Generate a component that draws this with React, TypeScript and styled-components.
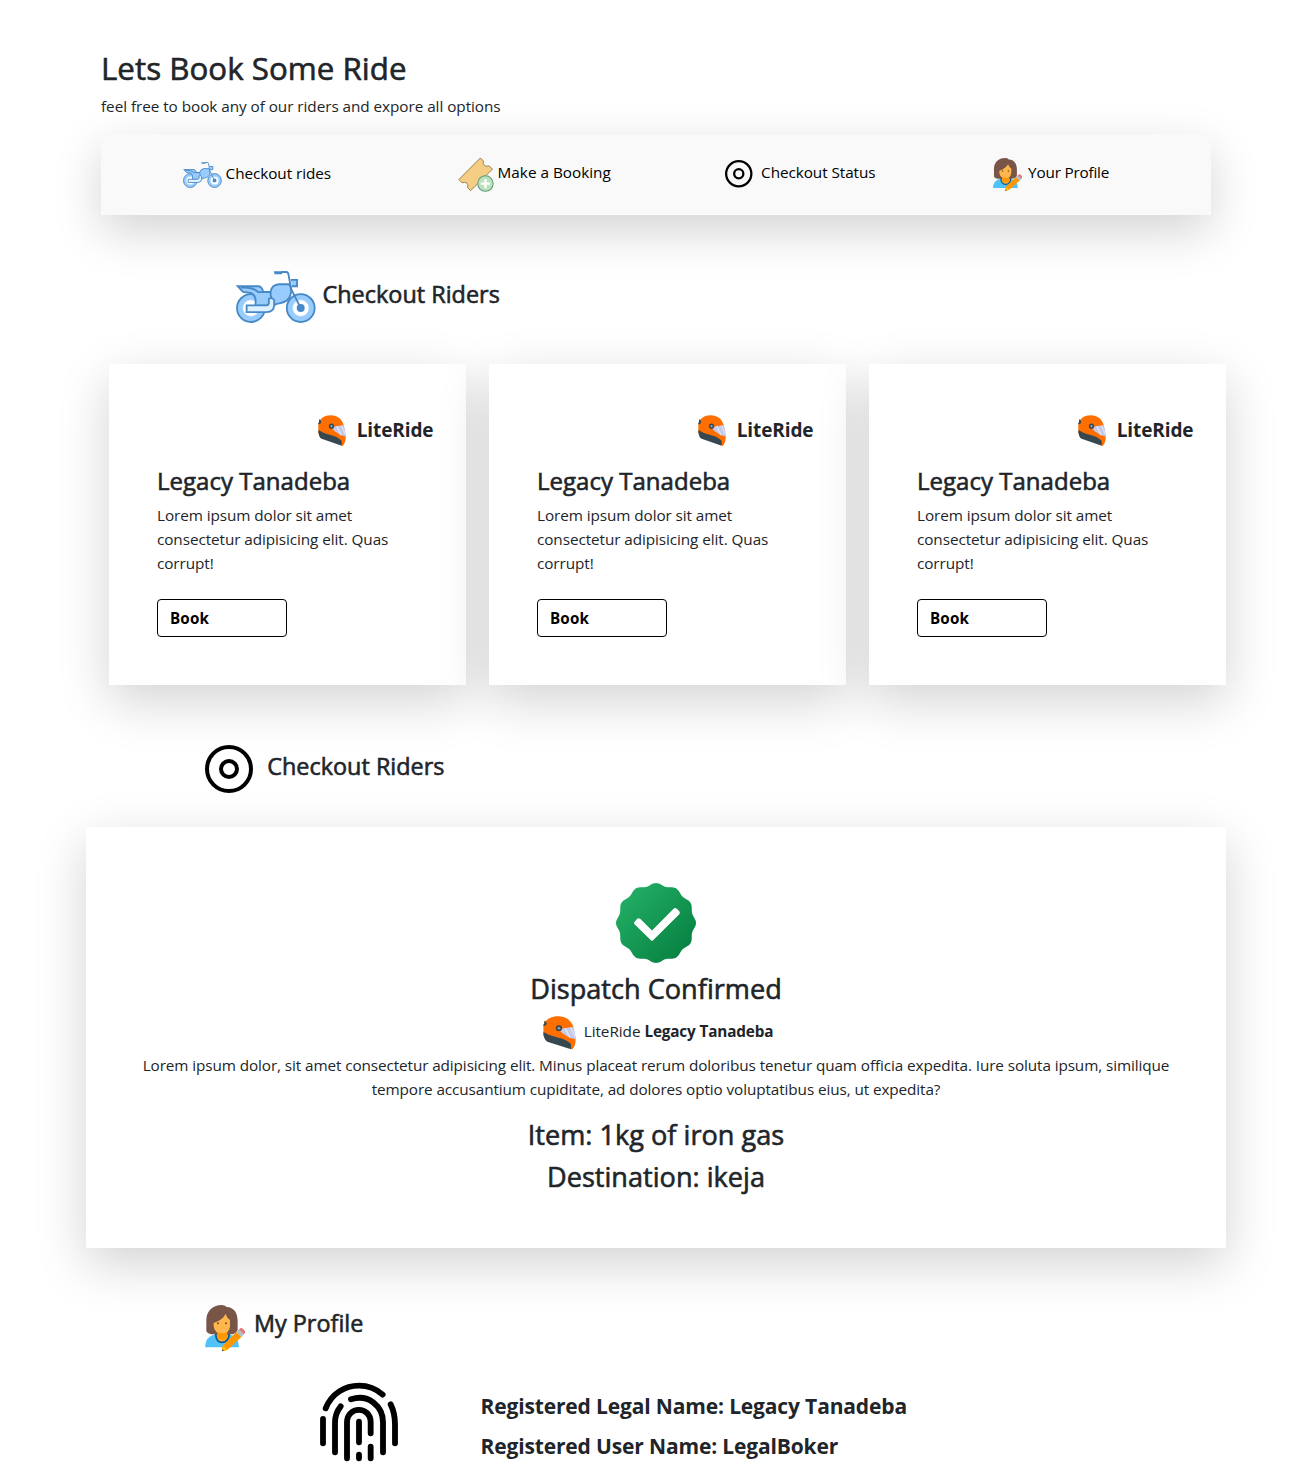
import React from 'react';
import styled, { createGlobalStyle, css } from 'styled-components';

const GlobalStyle = createGlobalStyle`
  *, *::before, *::after { box-sizing: border-box; }
  html, body { margin: 0; padding: 0; background: #fff; }
  body {
    font-family: 'Open Sans', 'Noto Sans', sans-serif;
    font-size: 15.3px;
    line-height: 24px;
    letter-spacing: -0.05px;
    color: #212529;
    overflow: hidden;
  }
  h1, h2, h3, p { margin: 0; font-weight: 400; }
  svg { display: block; flex: none; }
`;

const medium = css`
  font-weight: 400;
  letter-spacing: 0.02px;
  -webkit-text-stroke: 0.6px currentColor;
`;

const shadow = '0 16px 48px rgba(0, 0, 0, 0.175)';

const Page = styled.main`
  width: 1140px;
  height: 1465px;
  margin-left: 86px;
  padding-top: 48px;
`;

const Intro = styled.header`
  padding: 0 15px;
`;

const PageTitle = styled.h1`
  ${medium}
  padding-top: 1px;
  font-size: 31.3px;
  line-height: 38.4px;
  margin-bottom: 7px;
`;

const Nav = styled.nav`
  display: grid;
  grid-template-columns: 275px 267.5px 267.5px auto;
  align-items: center;
  height: 80.6px;
  margin: 16px 15px 0;
  padding: 0 0 1px 81.6px;
  background: #f9f9f9;
  box-shadow: ${shadow};
`;

const NavItem = styled.a<{ $gap: number; $drop?: number; $spacing?: number }>`
  display: flex;
  align-items: center;
  gap: ${p => p.$gap}px;
  padding-top: ${p => p.$drop ?? 0}px;
  color: #000;
  letter-spacing: ${p => p.$spacing ?? -0.07}px;
  white-space: nowrap;
`;

const NavLabel = styled.span`
  padding-bottom: 4px;
`;

const SectionTitle = styled.div<{ $top: number; $left: number; $gap: number; $drop: number }>`
  display: flex;
  align-items: flex-start;
  gap: ${p => p.$gap}px;
  margin-top: ${p => p.$top}px;
  margin-left: ${p => p.$left}px;
  h3 {
    ${medium}
    padding-top: ${p => p.$drop}px;
    font-size: 23.4px;
    line-height: 28.8px;
  }
`;

const Cards = styled.section`
  display: grid;
  grid-template-columns: repeat(3, 357px);
  gap: 23px;
  margin: 41px 0 0 23px;
`;

const Card = styled.article`
  height: 321px;
  padding: 50.5px 48px 48px;
  background: #fff;
  box-shadow: ${shadow};
`;

const Brand = styled.div`
  display: flex;
  align-items: center;
  justify-content: flex-end;
  gap: 11px;
  height: 31px;
  margin: 0 -15.5px 20.5px 0;
  font-size: 19px;
  font-weight: 700;
  svg { margin-top: 1px; }
  span { letter-spacing: -0.1px; }
`;

const RiderName = styled.h3`
  ${medium}
  padding-top: 1px;
  font-size: 24px;
  line-height: 28.8px;
  margin-bottom: 7px;
`;

const RiderText = styled.p`
  letter-spacing: -0.08px;
`;

const BookButton = styled.button`
  display: block;
  width: 130px;
  height: 38px;
  margin-top: 24px;
  padding: 0 12px;
  border: 1px solid #000;
  border-radius: 4px;
  background: transparent;
  color: #000;
  font: 700 15.2px/24px 'Open Sans', 'Noto Sans', sans-serif;
  letter-spacing: 0.15px;
  text-align: left;
`;

const Status = styled.section`
  display: flex;
  flex-direction: column;
  align-items: center;
  height: 421px;
  margin-top: 34px;
  padding: 56px 48px 48px;
  background: #fff;
  box-shadow: ${shadow};
  text-align: center;
`;

const StatusHeading = styled.h2<{ $top: number }>`
  ${medium}
  margin-top: ${p => p.$top}px;
  font-size: 27.1px;
  line-height: 33.6px;
`;

const Dispatcher = styled.div`
  display: flex;
  align-items: center;
  gap: 8px;
  height: 40px;
  margin: 7px 0 0 4px;
  p { padding-bottom: 4px; }
  b { letter-spacing: -0.15px; }
`;

const StatusText = styled.p`
  letter-spacing: -0.1px;
`;

const Profile = styled.section`
  display: flex;
  gap: 81.5px;
  margin: 31px 0 0 233px;
`;

const ProfileLines = styled.div`
  padding-top: 8px;
`;

const ProfileLine = styled.p`
  margin-bottom: 8px;
  font-size: 21px;
  font-weight: 700;
  line-height: 32px;
  letter-spacing: -0.15px;
`;

const Motorcycle = ({ width, height }: { width: number; height: number }) => (
  <svg width={width} height={height} viewBox="48 47 241 157" preserveAspectRatio="none" fill="#98ccfd" stroke="#4788c7" strokeWidth="5.5">
    <circle cx="93" cy="159" r="42" />
    <circle cx="93" cy="159" r="25" fill="#fff" stroke="#a9d2fb" strokeWidth="2" />
    <circle cx="243" cy="159" r="42" />
    <circle cx="243" cy="159" r="25" fill="#fff" stroke="#a9d2fb" strokeWidth="2" />
    <path d="M53 93H116Q126 94 130 110H152Q156 88 178 87H207Q213 91 214 103C214 132 200 142 171 146L160 152H107V132Q105 120 95 114L69 110Z" />
    <path d="M63 97Q101 95 115 111H150" fill="none" />
    <path d="M152 110Q151 121 156 131" fill="none" />
    <path d="M80 151H138Q145 151 147 144V131Q154 126 163 134V151Q162 170 140 171H80Z" fill="#dff0fe" />
    <path d="M162 48H187V57H164Z" fill="#4788c7" stroke="none" />
    <path d="M184 50H199Q205 50 206 57L214 101L243 159" fill="none" />
    <path d="M213 74H232V93H216" />
    <circle cx="243" cy="159" r="12" fill="#4788c7" stroke="none" />
  </svg>
);

const Ticket = () => (
  <svg width="36" height="35" viewBox="38 34 106 104">
    <path
      d="M104 37 113 46Q110 55 117 60Q123 63 129 60L140 70L75 134L66 125Q69 115 63 111Q58 107 50 111L40 101Z"
      fill="#f5ce85" stroke="#967a44" strokeWidth="2.8" strokeLinejoin="round"
    />
    <circle cx="119" cy="113" r="23" fill="#bae0bd" stroke="#5e9c76" strokeWidth="3" />
    <path d="M119 99V127M105 113H133" stroke="#fff" strokeWidth="7" />
  </svg>
);

const Target = ({ size }: { size: number }) => (
  <svg width={size} height={size} viewBox="0 0 48 48" fill="none" stroke="#000" strokeWidth="4">
    <circle cx="24" cy="24" r="22" />
    <circle cx="24" cy="24" r="8" />
  </svg>
);

const Person = ({ width, height }: { width: number; height: number }) => (
  <svg width={width} height={height} viewBox="45 44 121 140" preserveAspectRatio="none">
    <path d="M45 171Q46 139 75 132H118Q147 139 147 171Z" fill="#4fc3f7" />
    <path d="M77 130Q78 156 97 156T118 130Z" fill="#ffa726" stroke="#01579b" strokeWidth="5" />
    <path d="M49 122V90C49 62 68 45 94 44Q105 44 110 50C132 51 143 68 143 91V118Q139 132 119 132H71Q53 132 49 122Z" fill="#795548" />
    <path d="M82 122H112V143Q97 153 82 143Z" fill="#ff9800" />
    <path d="M71 98Q97 90 107 71Q111 84 120 89V107Q119 129 96 129T71 107Z" fill="#ffb74d" />
    <circle cx="84" cy="99" r="3" fill="#784719" />
    <circle cx="108" cy="99" r="3" fill="#784719" />
    <path d="M97 167 139 125 155 139 113 178 96 184Z" fill="#ff9800" />
    <path d="M139 125 147 117 162 132 154 140Z" fill="#b0bec5" />
    <path d="M147 117 151 114Q155 112 159 116L164 121Q167 125 164 129L161 132Z" fill="#e57373" />
    <path d="M99 168 113 178 96 184Z" fill="#ffc107" />
    <path d="M97 177 102 181 96 184Z" fill="#37474f" />
  </svg>
);

const Helmet = ({ width, height }: { width: number; height: number }) => (
  <svg width={width} height={height} viewBox="83 44 85 95" preserveAspectRatio="none">
    <path d="M84 94V73C88 54 103 45 121 45C143 45 157 58 161 75L167 107Q168 127 158 138L146 126L84 100Z" fill="#ff6f00" />
    <path d="M84 89Q102 101 121 104Q143 109 155 122V137L94 116Q84 110 84 89Z" fill="#37474f" />
    <path d="M121 80 161 75Q167 91 167 109Q150 106 134 93Z" fill="#c5cae9" />
    <path d="M138 79 143 78 155 106 150 104ZM152 76 156 75.5 166 99V106Z" fill="#e0e3f5" />
    <circle cx="124" cy="78" r="8" fill="#37474f" />
    <circle cx="124" cy="78" r="3.5" fill="#90a4ae" />
    <path d="M87 57Q94 60 92 68Q89 73 84 72V68Q88 66 86 60Z" fill="#37474f" />
  </svg>
);

const badgeEdge = Array.from({ length: 180 }, (_, i) => {
  const a = (i * Math.PI) / 90;
  const r = 38.7 + 1.3 * Math.cos(12 * a);
  return `${(40 + r * Math.cos(a)).toFixed(2)},${(40 + r * Math.sin(a)).toFixed(2)}`;
}).join(' ');

const Badge = () => (
  <svg width="80" height="80" viewBox="0 0 80 80">
    <defs>
      <linearGradient id="badge" x1="0.13" y1="0.13" x2="0.87" y2="0.87">
        <stop offset="0" stopColor="#21ad64" />
        <stop offset="1" stopColor="#088242" />
      </linearGradient>
    </defs>
    <polygon points={badgeEdge} fill="url(#badge)" />
    <path
      d="M17.7 38.9 20.8 35.7Q22.5 34.2 24.2 35.7L36 47.4L57.4 26Q59.2 24.5 60.9 26L63.5 28.7Q64.8 30.2 63.5 31.8L37.3 57.6Q36 58.8 34.7 57.6L18 41.2Q17 40 17.7 38.9Z"
      fill="#07733a" opacity="0.25"
    />
    <path
      d="M18.5 38.7 21.2 35.8Q22.7 34.5 24.2 35.8L36 47.4L57.8 25.6Q59.3 24.4 60.8 25.7L63.3 28.3Q64.5 29.8 63.3 31.2L37.1 57.3Q36 58.3 34.9 57.3L18.5 41.2Q17.4 40 18.5 38.7Z"
      fill="#fff"
    />
  </svg>
);

const Fingerprint = () => (
  <svg width="80" height="80" viewBox="57 36 240 240" fill="none" stroke="#000" strokeWidth="17.5" strokeLinecap="round">
    <path d="M77 115C95 70 135 47 177 47Q218 47 248 74" />
    <path d="M69 147V220" />
    <path d="M272 103Q285 129 285 163V220" />
    <path d="M153 88C205 70 249 109 249 157V247" />
    <path d="M122 109Q105 130 105 158V247" />
    <path d="M141 265V157C141 108 212 107 212 157V190" />
    <path d="M177 155V217M177 254V265M212 230V265" />
  </svg>
);

const RiderCard = () => (
  <Card>
    <Brand>
      <Helmet width={28} height={31.5} />
      <span>LiteRide</span>
    </Brand>
    <RiderName>Legacy Tanadeba</RiderName>
    <RiderText>Lorem ipsum dolor sit amet consectetur adipisicing elit. Quas corrupt!</RiderText>
    <BookButton>Book</BookButton>
  </Card>
);

export default function App() {
  return (
    <>
      <GlobalStyle />
      <Page>
        <Intro>
          <PageTitle>Lets Book Some Ride</PageTitle>
          <p>feel free to book any of our riders and expore all options</p>
        </Intro>
        <Nav>
          <NavItem $gap={4} $drop={1}>
            <Motorcycle width={39} height={26} />
            <NavLabel>Checkout rides</NavLabel>
          </NavItem>
          <NavItem $gap={4} $spacing={0}>
            <Ticket />
            <NavLabel>Make a Booking</NavLabel>
          </NavItem>
          <NavItem $gap={8.5}>
            <Target size={27.5} />
            <NavLabel>Checkout Status</NavLabel>
          </NavItem>
          <NavItem $gap={6} $spacing={-0.2}>
            <Person width={29.5} height={33} />
            <NavLabel>Your Profile</NavLabel>
          </NavItem>
        </Nav>

        <SectionTitle $top={56} $left={150} $gap={6.5} $drop={9.2}>
          <Motorcycle width={80} height={52} />
          <h3>Checkout Riders</h3>
        </SectionTitle>
        <Cards>
          <RiderCard />
          <RiderCard />
          <RiderCard />
        </Cards>

        <SectionTitle $top={60} $left={119} $gap={14.2} $drop={7.2}>
          <Target size={48} />
          <h3>Checkout Riders</h3>
        </SectionTitle>
        <Status>
          <Badge />
          <StatusHeading $top={9}>Dispatch Confirmed</StatusHeading>
          <Dispatcher>
            <Helmet width={33} height={34} />
            <p>LiteRide <b>Legacy Tanadeba</b></p>
          </Dispatcher>
          <StatusText>
            Lorem ipsum dolor, sit amet consectetur adipisicing elit. Minus placeat rerum doloribus tenetur quam officia
            expedita. Iure soluta ipsum, similique tempore accusantium cupiditate, ad dolores optio voluptatibus eius, ut expedita?
          </StatusText>
          <StatusHeading $top={17}>Item: 1kg of iron gas</StatusHeading>
          <StatusHeading $top={8.4}>Destination: ikeja</StatusHeading>
        </Status>

        <SectionTitle $top={56.7} $left={119} $gap={8.6} $drop={4.6}>
          <Person width={40.3} height={46.7} />
          <h3>My Profile</h3>
        </SectionTitle>
        <Profile>
          <Fingerprint />
          <ProfileLines>
            <ProfileLine>Registered Legal Name: Legacy Tanadeba</ProfileLine>
            <ProfileLine>Registered User Name: LegalBoker</ProfileLine>
          </ProfileLines>
        </Profile>
      </Page>
    </>
  );
}
